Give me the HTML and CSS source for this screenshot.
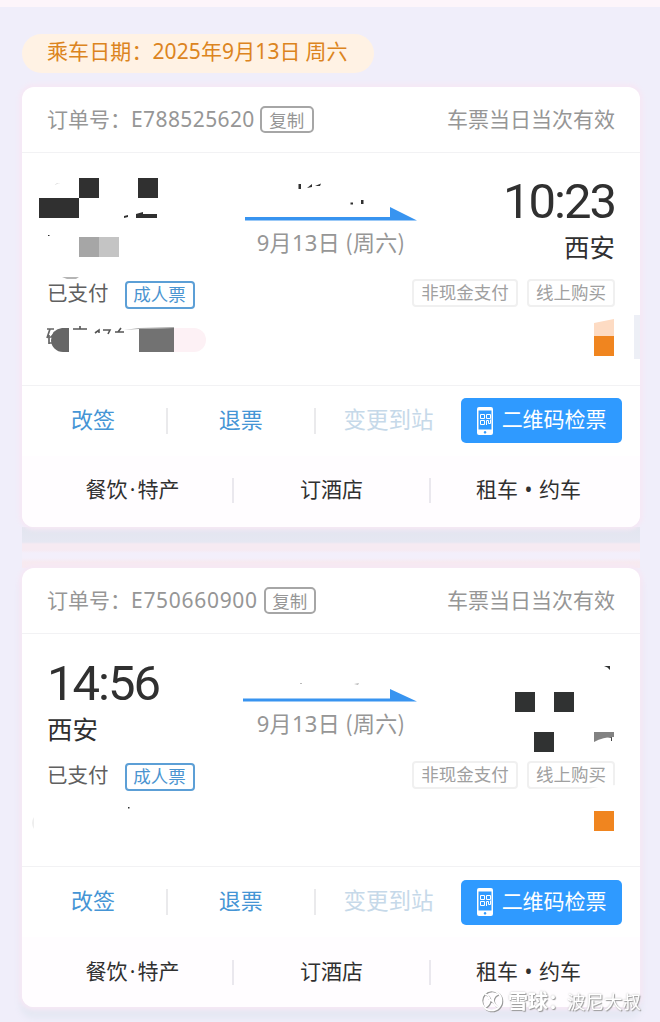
FILE: index.html
```html
<!DOCTYPE html>
<html lang="zh-CN">

<head>
    <meta charset="UTF-8">
    <meta name="viewport" content="width=device-width, initial-scale=1.0">
    <title>车票订单</title>
    <link rel="stylesheet" href="styles.css">
</head>

<body>
    <div class="page">
        <div class="date-pill">乘车日期：<span class="num">2025</span>年<span class="num">9</span>月<span class="num">13</span>日 周六</div>

        <div class="card">
            <div class="card-head">
                <span>订单号：</span><span class="order-no">E788525620</span>
                <button class="copy">复制</button>
                <span class="valid">车票当日当次有效</span>
            </div>
            <div class="card-body">
                <div class="route">
                    <div class="stop"></div>
                    <div class="trip">
                        <svg class="arrow" width="174" height="16" viewBox="0 0 174 16">
                            <path d="M1 11h145V1l27 13.500H1z" fill="#3894f0"/>
                        </svg>
                        <div class="trip-date"><span class="num">9</span>月<span class="num">13</span>日 (周六)</div>
                    </div>
                    <div class="stop end">
                        <div class="time">10:23</div>
                        <div class="station">西安</div>
                    </div>
                </div>
                <div class="status">
                    <span class="paid">已支付</span>
                    <span class="badge">成人票</span>
                    <span class="tag first">非现金支付</span>
                    <span class="tag">线上购买</span>
                </div>
                <!-- hidden passenger details -->
                <svg class="mask" viewBox="22 153 618 232">
                    <g fill="#303030">
                        <path d="M79 178h20v20H79zM138 178h20v20h-20zM39 198h40v20H39zM136 214l7-2v2h14v4h-21zM124 216l4-1v2l-4 1z"/>
                        <path d="M54 185q3-2 7-2-3 0-7 2zM298.500 184h2.500v5h-2.500zM307 188l5-4v3zM315 186l6-2.500-1 2.500zM350.500 202.500h2.500v2h-2.500zM361 200h2.500v4H361z"/>
                        <path d="M48 235h1.500v1H48z"/>
                    </g>
                    <path d="M79 237h20v20H79z" fill="#a6a6a6"/>
                    <path d="M99 237h20v20H99z" fill="#c4c4c4"/>
                    <path d="M62 277h17l-3 2h-9z" fill="#b5b5b5"/>
                    <path d="M47 329h7M50 329l-3 9M49 335v9M49 343h4M54 334l-3 3h5" fill="none" stroke="#666" stroke-width="1.700"/>
                    <path d="M73 329h14M80 326v3M95 333l4-3v3M103 330h7l-2 4M115 332h9M121 328l-3 4" fill="none" stroke="#555" stroke-width="1.600"/>
                    <path d="M124 330l15-2 35-1v1l-35 1z" fill="#aaa"/>
                    <path d="M69 328v24h-6a12 12 0 0 1-12-12q1-11 11-12z" fill="#666"/>
                    <path d="M139 329l35-1v24h-35z" fill="#727272"/>
                    <path d="M174 328h20a12 12 0 0 1 0 24h-20z" fill="#fdf1f5"/>
                    <path d="M594 323l20-4v17h-20z" fill="#fddbc3"/>
                    <path d="M594 336h20v20h-20z" fill="#f0851f"/>
                    <path d="M634 315h6v44h-6z" fill="#edeff6"/>
                </svg>
            </div>
            <div class="actions">
                <a class="action">改签</a>
                <a class="action">退票</a>
                <a class="action disabled">变更到站</a>
                <button class="qr-btn">
                    <svg width="16" height="28" viewBox="0 0 16 28">
                        <path fill="#fff" fill-rule="evenodd" d="M2 0h12q2 0 2 2v24q0 2-2 2H2q-2 0-2-2V2q0-2 2-2zM1.500 3.500v19h13v-19zM8 24a1.300 1.300 0 1 0 .1 0z"/>
                        <path fill="none" stroke="#fff" d="M3.500 7.500h4v4h-4zM9.500 7.500h4v4h-4zM3.500 13.500h4v4h-4zM9.500 18v-4.500h2v3h2v-4"/>
                    </svg>
                    <span>二维码检票</span>
                </button>
            </div>
            <div class="services">
                <a class="service">餐饮<span class="dot">·</span>特产</a>
                <a class="service">订酒店</a>
                <a class="service">租车<span class="dot big">•</span>约车</a>
            </div>
        </div>

        <div class="gap"></div>

        <div class="card second">
            <div class="card-head">
                <span>订单号：</span><span class="order-no">E750660900</span>
                <button class="copy">复制</button>
                <span class="valid">车票当日当次有效</span>
            </div>
            <div class="card-body">
                <div class="route">
                    <div class="stop">
                        <div class="time">14:56</div>
                        <div class="station">西安</div>
                    </div>
                    <div class="trip">
                        <svg class="arrow" width="174" height="16" viewBox="0 0 174 16">
                            <path d="M-1 11.500h147V2l27 12.500H-1z" fill="#3894f0"/>
                        </svg>
                        <div class="trip-date"><span class="num">9</span>月<span class="num">13</span>日 (周六)</div>
                    </div>
                    <div class="stop end"></div>
                </div>
                <div class="status">
                    <span class="paid">已支付</span>
                    <span class="badge">成人票</span>
                    <span class="tag first">非现金支付</span>
                    <span class="tag">线上购买</span>
                </div>
                <svg class="mask" viewBox="22 634 618 232">
                    <path d="M515 692h20v20h-20zM554 692h20v20h-20zM534 732h20v20h-20zM604 666h6v4q-2-3-6-4zM128 807h1.500v1.500H128z" fill="#303232"/>
                    <path d="M594 732h20v5q-11 0-20 5z" fill="#828282"/>
                    <path d="M607 738l5-1v4h-1v-3z" fill="#444"/>
                    <path d="M300 683h2v1h-2zM354 684l5-1-1 2z" fill="#bbb"/>
                    <path d="M585 790q14-4 31-5v7h-31z" fill="#fff"/>
                    <path d="M594 811h20v20h-20z" fill="#f0851f"/>
                    <path d="M34 817v12q-4-6 0-12z" fill="#eee"/>
                </svg>
            </div>
            <div class="actions">
                <a class="action">改签</a>
                <a class="action">退票</a>
                <a class="action disabled">变更到站</a>
                <button class="qr-btn">
                    <svg width="16" height="28" viewBox="0 0 16 28">
                        <path fill="#fff" fill-rule="evenodd" d="M2 0h12q2 0 2 2v24q0 2-2 2H2q-2 0-2-2V2q0-2 2-2zM1.500 3.500v19h13v-19zM8 24a1.300 1.300 0 1 0 .1 0z"/>
                        <path fill="none" stroke="#fff" d="M3.500 7.500h4v4h-4zM9.500 7.500h4v4h-4zM3.500 13.500h4v4h-4zM9.500 18v-4.500h2v3h2v-4"/>
                    </svg>
                    <span>二维码检票</span>
                </button>
            </div>
            <div class="services">
                <a class="service">餐饮<span class="dot">·</span>特产</a>
                <a class="service">订酒店</a>
                <a class="service">租车<span class="dot big">•</span>约车</a>
            </div>
        </div>
    </div>

    <div class="watermark">
        <svg width="24" height="24" viewBox="0 0 24 24" fill="none">
            <g stroke="#999" stroke-width="1.600" transform="translate(1 1)">
                <circle cx="11.500" cy="11.500" r="10"/>
                <path d="M5 5q4 1 5 6-1 5-5 7M18 5q-4 1-5 6 1 5 5 7M8 9l7 6"/>
            </g>
            <g stroke="#fff" stroke-width="1.600">
                <circle cx="11.500" cy="11.500" r="10"/>
                <path d="M5 5q4 1 5 6-1 5-5 7M18 5q-4 1-5 6 1 5 5 7M8 8l7 7"/>
            </g>
        </svg>
        <b>雪球：</b><span>波尼大叔</span>
    </div>
</body>

</html>
```
FILE: styles.css
```css
* {
    box-sizing: border-box;
}

body {
    margin: 0;
    height: 1022px;
    overflow: hidden;
    background-color: #f0eefa;
    font-family: "Noto Sans CJK SC", sans-serif;
    color: #303030;
}

.page {
    height: 1022px;
    border-top: 7px solid #fdf5fa;
    padding: 27px 20px 0 22px;
}

.num,
.order-no {
    font-family: "Noto Sans", "Open Sans", sans-serif;
}

.date-pill {
    width: 352px;
    height: 39px;
    margin-bottom: 14px;
    padding-left: 25px;
    border-radius: 20px;
    background-color: #fff2e4;
    color: #dc8420;
    font-size: 21px;
    line-height: 32px;
    letter-spacing: 0.1px;
    white-space: nowrap;
}

.card {
    height: 440px;
    border-radius: 12px;
    background-color: #fff;
    box-shadow: 0 0 4px 3px #f6e8f5;
}

.card.second {
    height: 439px;
    box-shadow: 0 0 4px 3px #f6e8f5, 0 10px 6px 2px #e5e8f3;
}

.gap {
    position: relative;
    height: 41px;
    background: linear-gradient(#e2e5ef 0, #e6e7f2 15px, #f6eaf2 17px, #f6eaf2 23px, #f3effb 26px, #f3effb 31px, #f7eaf0 35px);
    z-index: -1;
}

.card-head {
    display: flex;
    align-items: center;
    height: 66px;
    padding: 0 25px 3px;
    border-bottom: 1px solid #f2f2f4;
    color: #969696;
    font-size: 21px;
    white-space: nowrap;
}

.order-no {
    padding-top: 2px;
    letter-spacing: 0.400px;
}

.copy {
    width: 54px;
    height: 27px;
    margin: 3px 0 0 5px;
    padding: 0;
    border: 2px solid #a6a6a6;
    border-radius: 5px;
    background: none;
    color: #969696;
    font-family: inherit;
    font-size: 17.500px;
    line-height: 21px;
}

.valid {
    margin-left: auto;
}

.card-body {
    position: relative;
    height: 232px;
    padding: 17px 25px 0;
}

.route {
    display: flex;
    height: 100px;
}

.stop {
    width: 197px;
}

.stop.end {
    text-align: right;
}

.time {
    height: 61px;
    font-family: Roboto, sans-serif;
    font-size: 49px;
    line-height: 64px;
    letter-spacing: -2px;
}

.station {
    font-size: 25.500px;
    line-height: 30px;
}

.trip {
    width: 174px;
    padding-top: 36px;
    text-align: center;
}

.arrow {
    display: block;
    overflow: visible;
}

.trip-date {
    color: #969696;
    font-size: 22px;
    line-height: 38px;
    letter-spacing: 0.300px;
    white-space: nowrap;
}

.status {
    display: flex;
    align-items: center;
    height: 44px;
    white-space: nowrap;
}

.paid {
    color: #606060;
    font-size: 20.500px;
}

.badge {
    width: 70px;
    height: 28px;
    margin: 5px 0 0 16px;
    border: 2px solid #5c9fd6;
    border-radius: 4px;
    color: #4a94d0;
    font-size: 17.500px;
    line-height: 21px;
    text-align: center;
}

.tag {
    height: 28px;
    width: 88px;
    margin: 2px 0 0 9px;
    border: 2px solid #f0f0f0;
    border-radius: 4px;
    color: #a0a0a0;
    font-size: 17.500px;
    line-height: 21px;
    text-align: center;
}

.tag.first {
    width: 106px;
    margin-left: auto;
}

.mask {
    position: absolute;
    left: 0;
    top: 0;
    width: 618px;
    height: 232px;
}

.actions {
    display: flex;
    align-items: center;
    height: 71px;
    padding: 0 18px 1px 0;
    border-top: 1px solid #f2f2f4;
}

.action {
    width: 148px;
    height: 26px;
    border-left: 2px solid #eaeaec;
    color: #4595d5;
    font-size: 22px;
    line-height: 21px;
    text-align: center;
}

.action:first-child {
    width: 144px;
    padding-right: 2px;
    border-left: 0;
}

.action.disabled {
    color: #c6d9e9;
    font-size: 22.500px;
}

.qr-btn {
    display: flex;
    align-items: center;
    justify-content: center;
    gap: 9px;
    width: 161px;
    height: 45px;
    margin-left: auto;
    padding: 0;
    border: 0;
    border-radius: 5px;
    background-color: #2f9aff;
    color: #fff;
    font-family: inherit;
    font-size: 21px;
    white-space: nowrap;
}

.qr-btn span {
    padding-bottom: 5px;
    line-height: 30px;
}

.services {
    display: flex;
    align-items: center;
    height: 71px;
    padding-bottom: 2px;
    border-radius: 0 0 12px 12px;
    background-color: #fffdff;
}

.service {
    width: 197px;
    height: 25px;
    border-left: 2px solid #eae8ee;
    font-size: 21px;
    line-height: 21px;
    text-align: center;
}

.service:first-child {
    width: 210px;
    padding-left: 11px;
    border-left: 0;
}

.dot {
    display: inline-block;
    width: 10px;
    font-family: "Noto Sans", sans-serif;
    text-align: center;
}

.dot.big {
    width: 21px;
}

.second .order-no {
    letter-spacing: 0.700px;
}

.second .copy {
    width: 52px;
    margin-left: 6px;
}

.second .stop {
    padding-top: 1px;
}

.second .status {
    height: 46px;
}

.second .actions {
    padding-bottom: 0;
}

.second .services {
    height: 70px;
    padding-bottom: 0;
}

.watermark {
    position: fixed;
    left: 480px;
    top: 987px;
    display: flex;
    align-items: center;
    height: 28px;
    color: #fff;
    font-size: 18.500px;
    line-height: 28px;
    text-shadow: 1px 1px 1px #999, 0 0 2px #bbb;
    white-space: nowrap;
}

.watermark b {
    width: 59px;
    margin-left: 4px;
    font-size: 20px;
}
```
